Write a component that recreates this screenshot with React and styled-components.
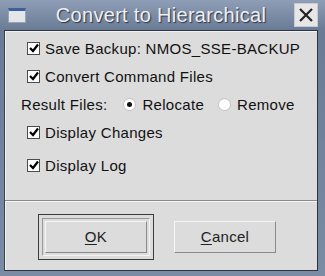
import React from 'react';
import styled, { createGlobalStyle } from 'styled-components';

const Global = createGlobalStyle`
  html, body {
    margin: 0;
    padding: 0;
    background: #6f809a;
  }
`;

const Window = styled.div`
  width: 325px;
  height: 276px;
  box-sizing: border-box;
  background: linear-gradient(#8e9eb6, #6a7b96 30px, #7a8ba4);
  display: flex;
  flex-direction: column;
  padding: 0 7px 5px 4px;
  font-family: 'Liberation Sans', Arial, sans-serif;
`;

const TitleBar = styled.div`
  height: 30px;
  display: flex;
  align-items: center;
  margin-right: -7px;
`;

const TitleIcon = styled.div`
  width: 18px;
  height: 15px;
  margin-left: 4px;
  box-sizing: border-box;
  background: #e4e6ea;
  border: 1px solid #9aa3b0;
  border-top: 3px solid #3d5f9e;
`;

const Title = styled.div`
  flex: 1;
  text-align: center;
  color: #eef0f4;
  font-size: 20px;
  letter-spacing: 0.3px;
  text-shadow: 1px 1px 1px #2b3446;
  padding-left: 2px;
`;

const CloseButton = styled.div`
  width: 22px;
  height: 22px;
  margin-right: 7px;
  background: #e6e6e6;
  border: 1px solid #c8ccd2;
  display: flex;
  align-items: center;
  justify-content: center;
`;

const Panel = styled.div`
  flex: 1;
  background: #dcdcdc;
  border: 1px solid #2f3540;
  border-left-color: #3a4150;
  display: flex;
  flex-direction: column;
  box-shadow: inset 1px 1px 0 #f2f2f2;
`;

const Form = styled.div`
  display: flex;
  flex-direction: column;
  padding: 3px 0 0 0;
  height: 166px;
  border-bottom: 1px solid #8a8a8a;
  box-shadow: 0 1px 0 #f6f6f6;
  font-size: 15px;
  letter-spacing: 0.3px;
  color: #111;
`;

const Row = styled.div`
  height: 28px;
  display: flex;
  align-items: center;
  padding-left: ${p => p.$indent || 22}px;
  margin-top: ${p => p.$gap || 0}px;
`;

const Box = styled.span`
  width: 11px;
  height: 11px;
  background: #fff;
  border: 1px solid #4c4c4c;
  display: inline-flex;
  align-items: center;
  justify-content: center;
  margin-right: 5px;
`;

const Label = styled.span`
  white-space: nowrap;
`;

const RadioDot = styled.span`
  width: 11px;
  height: 11px;
  border-radius: 50%;
  background: #fff;
  box-shadow: 0 0 0 1px #c4c4c4;
  display: inline-flex;
  align-items: center;
  justify-content: center;
  margin: 0 7px 0 ${p => p.$left}px;
  &::after {
    content: '';
    width: 5px;
    height: 5px;
    border-radius: 50%;
    background: ${p => (p.$on ? '#111' : 'transparent')};
  }
`;

const Buttons = styled.div`
  flex: 1;
  display: flex;
  align-items: center;
  padding-left: 33px;
  padding-top: 2px;
`;

const DefaultFrame = styled.div`
  border: 1px solid #3c3c3c;
  padding: 3px;
  margin-right: 20px;
`;

const DefaultInner = styled.div`
  border: 1px solid;
  border-color: #9a9a9a #f4f4f4 #f4f4f4 #9a9a9a;
  padding: 2px;
`;

const Button = styled.div`
  width: 100px;
  height: 30px;
  box-sizing: content-box;
  border: 1px solid;
  border-color: #f6f6f6 #8a8a8a #8a8a8a #f6f6f6;
  background: #dcdcdc;
  display: flex;
  align-items: center;
  justify-content: center;
  font-size: 15px;
  letter-spacing: 0.3px;
  color: #222;
  u {
    text-decoration-thickness: 1px;
    text-underline-offset: 2px;
  }
`;

const Check = () => (
  <Box>
    <svg width="10" height="10" viewBox="0 0 10 10">
      <path d="M1 5 L4 8 L9 1.5" fill="none" stroke="#000" strokeWidth="2.2" />
    </svg>
  </Box>
);

export default function App() {
  return (
    <>
      <Global />
      <Window>
        <TitleBar>
          <TitleIcon />
          <Title>Convert to Hierarchical</Title>
          <CloseButton>
            <svg width="16" height="16" viewBox="0 0 16 16">
              <path d="M2 2 L14 14 M14 2 L2 14" stroke="#222" strokeWidth="2.2" />
            </svg>
          </CloseButton>
        </TitleBar>
        <Panel>
          <Form>
            <Row>
              <Check />
              <Label>Save Backup: NMOS_SSE-BACKUP</Label>
            </Row>
            <Row>
              <Check />
              <Label>Convert Command Files</Label>
            </Row>
            <Row $indent={16}>
              <Label>Result Files:</Label>
              <RadioDot $on $left={17} />
              <Label>Relocate</Label>
              <RadioDot $left={15} />
              <Label>Remove</Label>
            </Row>
            <Row>
              <Check />
              <Label>Display Changes</Label>
            </Row>
            <Row $gap={5}>
              <Check />
              <Label>Display Log</Label>
            </Row>
          </Form>
          <Buttons>
            <DefaultFrame>
              <DefaultInner>
                <Button>
                  <span><u>O</u>K</span>
                </Button>
              </DefaultInner>
            </DefaultFrame>
            <Button>
              <span><u>C</u>ancel</span>
            </Button>
          </Buttons>
        </Panel>
      </Window>
    </>
  );
}
